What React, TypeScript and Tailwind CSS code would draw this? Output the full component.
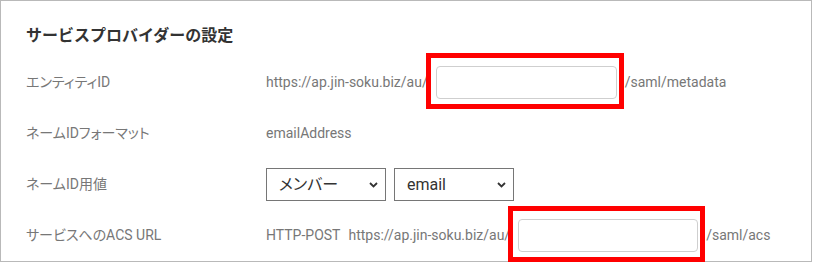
import React from "react";

function Chevron() {
  return (
    <svg
      width="9"
      height="6"
      viewBox="0 0 9 6"
      className="pointer-events-none absolute right-[8px] top-1/2 -translate-y-1/2"
    >
      <polyline points="1,1 4.5,4.5 8,1" fill="none" stroke="#333" strokeWidth="1.8" />
    </svg>
  );
}

function Select({ value, options }: { value: string; options: string[] }) {
  return (
    <div className="relative w-[120px] h-[33px]">
      <select
        defaultValue={value}
        className="appearance-none w-full h-full border border-[#767676] bg-white pl-[12px] pr-6 text-[16px] text-[#333] outline-none"
      >
        {options.map((o) => (
          <option key={o}>{o}</option>
        ))}
      </select>
      <Chevron />
    </div>
  );
}

// input with the red annotation frame drawn over it
function MarkedInput({ width }: { width: number }) {
  return (
    <span className="relative inline-flex mx-2">
      <input
        type="text"
        style={{ width }}
        className="h-[33px] rounded-[4px] border border-[#cfcfcf] bg-white outline-none"
      />
      <span className="pointer-events-none absolute -left-[10px] -right-[7px] -top-[13px] -bottom-[10px] border-[5px] border-[#ff0000]" />
    </span>
  );
}

function Row({ label, children }: { label: string; children: React.ReactNode }) {
  return (
    <div className="flex items-center h-[51px]">
      <div className="w-[240px] shrink-0 text-[14px] text-[#777]">{label}</div>
      <div className="flex items-center text-[14px] text-[#777]">{children}</div>
    </div>
  );
}

export default function App() {
  return (
    <div
      className="w-[812px] h-[262px] border border-[#b9b9b9] bg-white pl-[25px]"
      style={{ fontFamily: 'Roboto, "Noto Sans CJK JP", sans-serif', fontFeatureSettings: '"palt"' }}
    >
      <div className="h-[56px] pt-[19px]">
        <h2
          className="text-[16px] leading-[32px] font-bold text-[#333]"
          style={{ fontFeatureSettings: "normal" }}
        >
          サービスプロバイダーの設定
        </h2>
      </div>
      <Row label="エンティティID">
        <span>https://ap.jin-soku.biz/au/</span>
        <MarkedInput width={181} />
        <span>/saml/metadata</span>
      </Row>
      <Row label="ネームIDフォーマット">
        <span>emailAddress</span>
      </Row>
      <Row label="ネームID用値">
        <div className="flex gap-2">
          <Select value="メンバー" options={["メンバー"]} />
          <Select value="email" options={["email"]} />
        </div>
      </Row>
      <Row label="サービスへのACS URL">
        <span>HTTP-POST</span>
        <span className="ml-[8px]">https://ap.jin-soku.biz/au/</span>
        <MarkedInput width={180} />
        <span>/saml/acs</span>
      </Row>
    </div>
  );
}
